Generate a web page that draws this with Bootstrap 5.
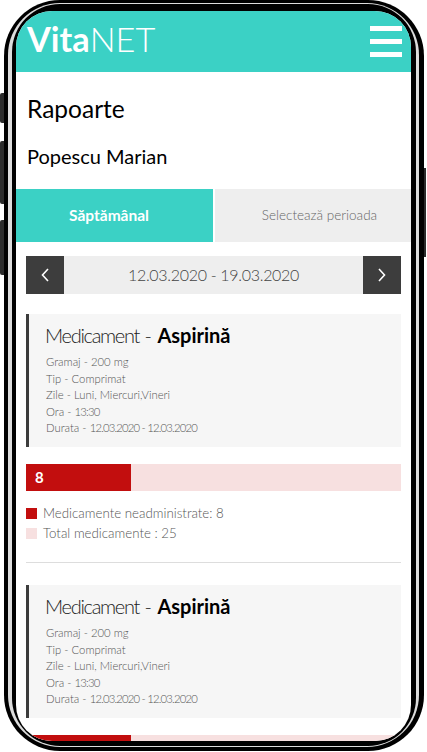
<!DOCTYPE html>
<html lang="ro">
<head>
  <meta charset="UTF-8">
  <title>VitaNET - Rapoarte</title>
  <meta name="viewport" content="width=device-width, initial-scale=1">
  <link href="https://cdn.jsdelivr.net/npm/bootstrap@5.3.3/dist/css/bootstrap.min.css" rel="stylesheet">
  <style>
    html, body {
      height: 752px;
      overflow: hidden;
      background-color: #fff;
    }
    body {
      font-family: "Lato", "Liberation Sans", sans-serif;
      font-weight: 300;
      color: #000;
    }
    .phone-wrap {
      position: relative;
      width: 427px;
      height: 752px;
      padding: 0 3px 1px 4px;
    }
    .phone-key {
      position: absolute;
      width: 4px;
      background-color: #2b2b2b;
    }
    .key-a { left: 0; top: 93px; height: 30px; border-radius: 2px 0 0 2px; }
    .key-b { left: 0; top: 141px; height: 63px; border-radius: 2px 0 0 2px; }
    .key-c { left: 0; top: 220px; height: 55px; border-radius: 2px 0 0 2px; }
    .key-d { right: 1px; top: 168px; height: 89px; width: 2px; }
    .phone-outer {
      height: 100%;
      padding: 3px 5px 4px 4px;
      background-color: #000;
      border-radius: 56px;
    }
    .phone-ring {
      height: 100%;
      padding: 1px 3px 1px 4px;
      background-color: #dcdcdc;
      border-radius: 52px;
    }
    .phone-inner {
      height: 100%;
      padding: 7px 5px 5px 4px;
      background-color: #000;
      border-radius: 48px;
    }
    .phone-screen {
      height: 100%;
      overflow: hidden;
      background-color: #fff;
      border-radius: 36px;
    }
    .top-bar {
      height: 61px;
      padding: 0 9px 0 11px;
      background-color: #3bd1c5;
    }
    .brand-logo {
      margin: 0 0 4px;
      padding: 0;
      font-size: 34.3px;
      line-height: 1;
      color: #fff;
      font-weight: 300;
    }
    .brand-logo b { font-weight: 700; }
    .menu-toggle {
      width: 32px;
      margin-top: -1px;
    }
    .menu-toggle span {
      display: block;
      height: 5px;
      background-color: #fff;
    }
    .page-title {
      margin: 23px 0 0 11px;
      font-size: 24.5px;
      line-height: 28px;
      font-weight: 400;
    }
    .patient-name {
      margin: 21px 0 0 11px;
      font-size: 20px;
      line-height: 24px;
      font-weight: 400;
    }
    .period-tabs {
      height: 53px;
      margin-top: 21px;
    }
    .period-tab {
      padding-left: 13px;
      font-size: 13.5px;
      color: #666;
      background-color: #eee;
    }
    .period-tab.is-active {
      flex: 0 0 197px;
      margin-right: 2px;
      padding: 0 11px 0 0;
      font-size: 15.5px;
      font-weight: 700;
      color: #fff;
      background-color: #3bd1c5;
    }
    .reports-body { padding: 14px 10px 0; }
    .date-bar {
      height: 38px;
      background-color: #eee;
      font-size: 16px;
      letter-spacing: -.3px;
      color: #444;
    }
    .date-arrow {
      width: 38px;
      height: 38px;
      padding: 0;
      border: 0;
      border-radius: 0;
      background-color: #3d3d3d;
    }
    .med-box {
      height: 133px;
      margin-top: 20px;
      padding: 8px 16px;
      background-color: #f6f6f6;
      border-left: 3px solid #3d3d3d;
    }
    .med-title {
      margin: 0 0 6px;
      font-size: 20px;
      line-height: 26px;
      font-weight: 300;
      color: #222;
    }
    .med-label { letter-spacing: -1.3px; }
    .med-title b { font-weight: 700; color: #000; }
    .med-info {
      padding-left: 1px;
      font-size: 11.3px;
      line-height: 16.5px;
      color: #555;
    }
    .tight-nums { letter-spacing: -.8px; }
    .dose-bar {
      height: 27px;
      margin-top: 17px;
      border-radius: 0;
      background-color: #f7e0e0;
    }
    .dose-fill {
      padding-left: 9px;
      text-align: left;
      font-size: 15px;
      font-weight: 700;
      background-color: #c20e0e;
    }
    .dose-legend {
      margin: 12px 0 0;
      font-size: 13.3px;
      line-height: 20px;
      color: #555;
    }
    .legend-swatch {
      width: 11px;
      height: 11px;
      margin-right: 6px;
    }
    .swatch-missed { background-color: #c20e0e; }
    .swatch-total { background-color: #f7e0e0; }
    .report-sep {
      margin: 19px 0 22px;
      border-color: #ddd;
      opacity: 1;
    }
    .report-sep + .med-box { margin-top: 0; }
  </style>
</head>
<body>
  <div class="phone-wrap">
    <span class="phone-key key-a"></span>
    <span class="phone-key key-b"></span>
    <span class="phone-key key-c"></span>
    <span class="phone-key key-d"></span>
    <div class="phone-outer">
      <div class="phone-ring">
        <div class="phone-inner">
          <div class="phone-screen">
            <nav class="top-bar d-flex align-items-center justify-content-between">
              <a class="brand-logo text-decoration-none" href="#"><b>Vita</b>NET</a>
              <div class="menu-toggle d-flex flex-column gap-2">
                <span></span>
                <span></span>
                <span></span>
              </div>
            </nav>

            <h1 class="page-title">Rapoarte</h1>
            <h2 class="patient-name">Popescu Marian</h2>

            <div class="period-tabs d-flex">
              <div class="period-tab is-active d-flex align-items-center justify-content-center">Săptămânal</div>
              <div class="period-tab flex-grow-1 d-flex align-items-center justify-content-center">Selectează perioada</div>
            </div>

            <div class="reports-body">
              <div class="date-bar d-flex align-items-center justify-content-between">
                <button class="btn date-arrow d-flex align-items-center justify-content-center" type="button" aria-label="Înapoi">
                  <svg width="8" height="14" viewBox="0 0 8 14"><path d="M7 1 1.5 7 7 13" fill="none" stroke="#fff" stroke-width="1.6"/></svg>
                </button>
                <span>12.03.2020 - 19.03.2020</span>
                <button class="btn date-arrow d-flex align-items-center justify-content-center" type="button" aria-label="Înainte">
                  <svg width="8" height="14" viewBox="0 0 8 14"><path d="M1 1 6.500 7 1 13" fill="none" stroke="#fff" stroke-width="1.6"/></svg>
                </button>
              </div>

              <div class="med-box">
                <h3 class="med-title"><span class="med-label">Medicament</span> - <b>Aspirină</b></h3>
                <div class="med-info">
                  <div>Gramaj - 200 mg</div>
                  <div>Tip - Comprimat</div>
                  <div>Zile - Luni, Miercuri,Vineri</div>
                  <div>Ora - <span class="tight-nums">13:30</span></div>
                  <div>Durata - <span class="tight-nums">12.03.2020 - 12.03.2020</span></div>
                </div>
              </div>

              <div class="progress dose-bar">
                <div class="progress-bar dose-fill" style="width: 28%">8</div>
              </div>

              <ul class="dose-legend list-unstyled">
                <li class="d-flex align-items-center"><span class="legend-swatch swatch-missed"></span>Medicamente neadministrate: 8</li>
                <li class="d-flex align-items-center"><span class="legend-swatch swatch-total"></span>Total medicamente : 25</li>
              </ul>

              <hr class="report-sep">

              <div class="med-box">
                <h3 class="med-title"><span class="med-label">Medicament</span> - <b>Aspirină</b></h3>
                <div class="med-info">
                  <div>Gramaj - 200 mg</div>
                  <div>Tip - Comprimat</div>
                  <div>Zile - Luni, Miercuri,Vineri</div>
                  <div>Ora - <span class="tight-nums">13:30</span></div>
                  <div>Durata - <span class="tight-nums">12.03.2020 - 12.03.2020</span></div>
                </div>
              </div>

              <div class="progress dose-bar">
                <div class="progress-bar dose-fill" style="width: 28%"></div>
              </div>
            </div>
          </div>
        </div>
      </div>
    </div>
  </div>
  <script src="https://cdn.jsdelivr.net/npm/bootstrap@5.3.3/dist/js/bootstrap.bundle.min.js"></script>
</body>
</html>
